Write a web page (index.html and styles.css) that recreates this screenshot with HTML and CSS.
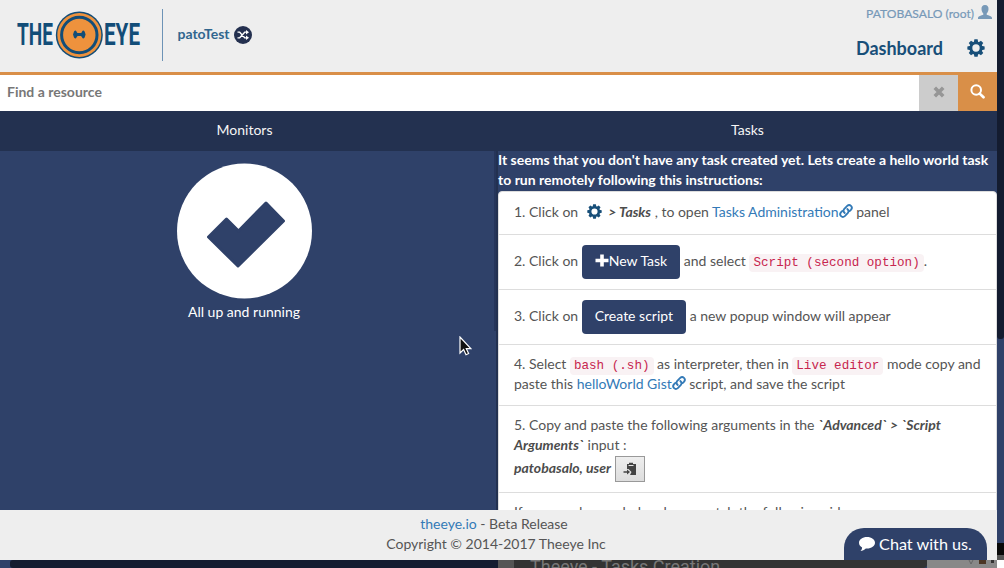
FILE: index.html
```html
<!DOCTYPE html>
<html lang="en">
<head>
<meta charset="utf-8">
<title>TheEye - Dashboard</title>
<link rel="stylesheet" href="styles.css">
</head>
<body>
<svg class="defs" width="0" height="0" aria-hidden="true">
  <symbol id="gear" viewBox="-10 -10 20 20">
    <circle r="5.7" fill="none" stroke="currentColor" stroke-width="3.2"/>
    <g fill="currentColor">
      <path id="teeth" d="M-1.8-9.6h3.6l.7 3.6h-5z"/>
      <use href="#teeth" transform="rotate(45)"/><use href="#teeth" transform="rotate(90)"/>
      <use href="#teeth" transform="rotate(135)"/><use href="#teeth" transform="rotate(180)"/>
      <use href="#teeth" transform="rotate(225)"/><use href="#teeth" transform="rotate(270)"/>
      <use href="#teeth" transform="rotate(315)"/>
    </g>
  </symbol>
  <symbol id="link" viewBox="0 0 14 14">
    <g fill="none" stroke="currentColor" stroke-width="1.9" stroke-linecap="round">
      <path d="M5.700 9C4.200 7.700 4.200 6 5.300 4.800L8.200 1.900C10.800-.4 14.300 2.900 12.100 5.600L10.600 7.100"/>
      <path d="M8.300 5C9.800 6.300 9.800 8 8.700 9.200L5.800 12.100C3.200 14.400-.3 11.100 1.900 8.400L3.400 6.900"/>
    </g>
  </symbol>
</svg>
<div class="screen">
  <div class="main">
    <div class="app">
      <header class="header">
        <svg class="logo" width="126" height="50" viewBox="0 0 126 50">
          <g class="logo-text">
            <text x="0" y="36.300" textLength="36" lengthAdjust="spacingAndGlyphs">THE</text>
            <text x="87" y="36.300" textLength="36" lengthAdjust="spacingAndGlyphs">EYE</text>
          </g>
          <circle cx="62.300" cy="26" r="23.500" fill="#124d78"/>
          <circle cx="62.300" cy="26" r="22" fill="#ee923d"/>
          <circle cx="62.300" cy="26" r="17.700" fill="none" stroke="#124d78" stroke-width="3"/>
          <path d="M57 22.500q1.500-2 2.500 0q.5 1.500 1.300 1.500h3q.8 0 1.300-1.500q1-2 2.500 0l1 3-1 3q-1.500 2-2.500 0q-.5-1.500-1.300-1.500h-3q-.8 0-1.300 1.500q-1 2-2.500 0l-1-3z" fill="#124d78"/>
        </svg>
        <div class="customer">
          <span>patoTest</span>
          <svg width="18" height="18" viewBox="0 0 18 18">
            <circle cx="9" cy="9" r="9" fill="#24304f"/>
            <g fill="none" stroke="#fff" stroke-width="1.300"><path d="M3.500 6.200h2.200l5 5.600h2M3.500 11.800h2.200l5-5.600h2"/></g>
            <path d="M12 4l3 2.200-3 2.200zM12 9.600l3 2.200-3 2.200z" fill="#fff"/>
          </svg>
        </div>
        <div class="session">
          <div class="user">
            <span>PATOBASALO (root)</span>
            <svg width="14" height="14" viewBox="0 0 14 14"><path d="M7 0c2.500 0 3.700 1.700 3.500 4.200C10.300 6.300 9.600 7.600 8.700 8.400v1.300c1.600.8 5.300 1.300 5.300 3.300v1H0v-1c0-2 3.700-2.500 5.300-3.300V8.400C4.400 7.600 3.700 6.300 3.500 4.200 3.300 1.700 4.500 0 7 0z" fill="#7799b8"/></svg>
          </div>
          <nav class="nav"><span>Dashboard</span><svg class="gear" width="18" height="18"><use href="#gear"/></svg></nav>
        </div>
      </header>
      <div class="search">
        <div class="search-input">Find a resource</div>
        <div class="search-clear"><svg width="12" height="12" viewBox="0 0 12 12"><path d="M1.800 1.800l8.400 8.400M10.200 1.800l-8.400 8.400" stroke="#969696" stroke-width="3.600"/></svg></div>
        <div class="search-go"><svg width="15" height="15" viewBox="0 0 15 15" fill="none" stroke="#fff"><circle cx="6.200" cy="6" r="4.800" stroke-width="2"/><path d="M9.700 9.600l3.800 3.700" stroke-width="2.700" stroke-linecap="round"/></svg></div>
      </div>
      <div class="heads"><div class="head-monitors">Monitors</div><div class="head-tasks">Tasks</div></div>
      <div class="panels">
        <section class="monitors">
          <svg width="136" height="136" viewBox="0 0 136 136"><circle cx="68.500" cy="68" r="67.500" fill="#fff"/><path d="M32.500 74L50.500 56L62.500 68L90 40L107.500 58L62 103Z" fill="#2f4169" stroke="#2f4169" stroke-width="3" stroke-linejoin="round"/></svg>
          <div>All up and running</div>
        </section>
        <div class="gutter"><div class="gutter-thumb"></div></div>
        <section class="tasks">
          <div class="intro">It seems that you don't have any task created yet. Lets create a hello world task<br>to run remotely following this instructions:</div>
          <ol class="steps">
            <li class="step step-1">1. Click on <svg class="step-gear" width="15" height="15"><use href="#gear"/></svg> <b class="em">&gt; Tasks</b> , to open <a>Tasks Administration<svg class="link" width="14" height="14"><use href="#link"/></svg></a> panel</li>
            <li class="step step-button">2. Click on <span class="btn"><svg class="plus" width="14" height="13" viewBox="0 0 14 13"><path d="M7 .5v12M.5 6.500h13" stroke="#fff" stroke-width="3.600"/></svg>New Task</span> and select <code>Script (second option)</code>.</li>
            <li class="step step-button">3. Click on <span class="btn">Create script</span> a new popup window will appear</li>
            <li class="step step-4">4. Select <code>bash (.sh)</code> as interpreter, then in <code>Live editor</code> mode copy and<br>paste this <a>helloWorld Gist<svg class="link" width="14" height="14"><use href="#link"/></svg></a> script, and save the script</li>
            <li class="step step-5">5. Copy and paste the following arguments in the <b class="em">`Advanced` &gt; `Script<br>Arguments`</b> input :
              <div class="copy-row"><b class="em">patobasalo, user</b>
                <span class="copy"><svg width="14" height="14" viewBox="0 0 14 14"><path d="M4 2h2V.8h4V2h3v11H7l1.500-3L5.500 7H4z" fill="#444"/><path d="M5.500 3.500h5" stroke="#e5e5e5"/><path d="M.5 10h4" stroke="#444" stroke-width="1.500"/><path d="M4 7.500L7 10 4 12.500z" fill="#444"/></svg></span>
              </div>
            </li>
            <li class="step">If you need some help, please watch the following video</li>
          </ol>
        </section>
      </div>
      <footer class="footer"><div class="release"><a>theeye.io</a> - Beta Release</div><div>Copyright © 2014-2017 Theeye Inc</div></footer>
      <div class="chat"><svg width="16" height="14" viewBox="0 0 16 14"><path d="M8 0c4.500 0 8 2.500 8 5.700s-3.500 5.800-8 5.800l-1.200-.1C5.300 13 3.500 13.800 1.500 14c1-1 1.500-2 1.600-3.500C1.200 9.400 0 7.700 0 5.700 0 2.500 3.500 0 8 0z" fill="#fff"/></svg><span>Chat with us.</span></div>
      <svg class="cursor" width="13" height="21" viewBox="0 0 13 21"><path d="M1 1v16l3.600-3.500L7 18.700l2.600-1.200-2.300-4.800h4.500z" fill="#111" stroke="#fff" stroke-width="1.200"/></svg>
    </div>
    <div class="page-scroll"><div class="page-thumb"></div><div class="page-rest"></div><div class="page-end"></div></div>
  </div>
  <div class="under">
    <div class="under-left"><div class="under-thumb"></div></div>
    <div class="under-edge"></div>
    <div class="video"><span>Theeye - Tasks Creation</span></div>
    <div class="video-end"><svg width="30" height="8" viewBox="0 0 30 8"><path d="M2 0l2 4 2-4" stroke="#666" fill="none"/><path d="M12 0h7v4h-7z" fill="#4b3524"/><path d="M24 0h3v3h-3z" fill="#333"/></svg></div>
    <div class="under-corner"></div>
  </div>
</div>
</body>
</html>
```

FILE: styles.css
```css
* { box-sizing: border-box; }
body { margin: 0; font: 14px/20px Lato, "Liberation Sans", sans-serif; color: #555; overflow: hidden; }
.defs { position: absolute; }
.screen { width: 1004px; height: 568px; background: #2f4169; display: flex; flex-direction: column; overflow: hidden; }
.main { display: flex; height: 560px; }
.app { position: relative; width: 997px; display: flex; flex-direction: column; }
a { color: #337ab7; }
.em { font-style: italic; font-weight: 700; color: #4c4c4c; }

.header { height: 75px; flex: none; background: #eee; border-bottom: 3px solid #d98f48; display: flex; padding: 9px 5px 0 17px; }
.logo { flex: none; overflow: visible; }
.logo-text { font: 700 31px Roboto, sans-serif; fill: #124d78; }
.customer { height: 52px; margin-left: 19px; padding-left: 14.500px; border-left: 1px solid #6d93b6; display: flex; align-items: center; gap: 4px; font-weight: 700; color: #31668e; }
.customer span { margin-top: -2px; }
.session { margin-left: auto; margin-top: -9px; }
.user { height: 28px; display: flex; align-items: center; justify-content: flex-end; gap: 4px; font-size: 12.100px; color: #7799b8; -webkit-text-stroke: .2px #7799b8; }
.user svg { margin-top: -4px; }
.nav { display: flex; align-items: center; justify-content: flex-end; gap: 24px; height: 40px; padding-right: 7px; font-size: 18px; font-weight: 700; color: #184f79; }

.search { height: 36px; flex: none; display: flex; }
.search-input { flex: 1; background: #fff; padding: 7px; font-weight: 700; color: #777; }
.search-clear, .search-go { width: 39px; background: #ccc; display: flex; align-items: center; justify-content: center; padding-bottom: 3px; }
.search-go { background: #d98f48; }

.heads { height: 40px; flex: none; display: flex; background: #233150; color: #f5f5f5; text-align: center; line-height: 38px; }
.head-monitors { width: 489px; }
.head-tasks { width: 499px; margin-left: 9px; }

.panels { height: 359px; flex: none; display: flex; overflow: hidden; }
.monitors { width: 494px; padding: 12px 6px 0 0; color: #fff; text-align: center; }
.monitors svg { display: block; margin: 0 auto 3px; }
.gutter { width: 4px; border-right: 2px solid #233150; }
.gutter-thumb { width: 2px; height: 180px; background: #26355a; }
.tasks { width: 499px; }
.intro { height: 40px; margin-top: -1px; margin-bottom: 1px; color: #fff; font-weight: 700; white-space: nowrap; letter-spacing: .010px; }
.steps { list-style: none; margin: 0; padding: 0; background: #fff; border: 1px solid #ddd; border-radius: 4px 4px 0 0; }
.step { padding: 9px 15px; border-bottom: 1px solid #ddd; white-space: nowrap; }
.step-1 { height: 43px; padding-top: 10px; }
.step-button { height: 55px; line-height: 34px; }
.step-4 { height: 61px; }
.step-5 { height: 87px; }
.step-gear { color: #184f79; vertical-align: -2px; margin: 0 3px 0 5px; }
.link { vertical-align: -1px; }
.btn { display: inline-block; height: 34px; margin-top: 1px; padding: 0 13px; line-height: 32px; border-radius: 4px; background: #2f4169; color: #fff; vertical-align: top; }
.plus { vertical-align: -1px; }
code { font: 12.600px "Liberation Mono", monospace; color: #c7254e; background: #f9f2f4; border-radius: 4px; padding: 2px 4px; }
.copy-row { display: flex; align-items: center; gap: 4px; height: 26px; }
.copy { width: 30px; height: 26px; margin-top: 2px; border: 1px solid #999; background: linear-gradient(#eee, #ddd); display: flex; align-items: center; justify-content: center; }

.footer { height: 50px; flex: none; background: #eee; text-align: center; padding: 4px 5px 0 0; position: relative; }
.release { padding-right: 4px; }
.chat { position: absolute; right: 10px; bottom: 0; width: 143px; height: 32px; padding-bottom: 1px; border-radius: 20px 20px 0 0; background: #2f4169; color: #fff; font-size: 16.200px; display: flex; align-items: center; justify-content: center; gap: 4px; }
.cursor { position: absolute; left: 459px; top: 336px; }

.page-scroll { width: 7px; }
.page-thumb { height: 339px; background: #141c30; border-radius: 0 0 3px 3px; }
.page-rest { height: 204px; }
.page-end { height: 17px; background: linear-gradient(#080808 70%, #555 70%); }

.under { height: 8px; display: flex; overflow: hidden; }
.under-left { width: 498px; padding-left: 10px; }
.under-thumb { height: 8px; border-radius: 3px 0 0 3px; background: #141c30; }
.under-edge { width: 16px; background: #555; }
.video { width: 413px; background: #333; border-radius: 0 0 4px 0; color: #777; font: 18px/18px Roboto, sans-serif; padding-left: 16px; }
.video span { display: block; margin-top: -2px; }
.video-end { width: 70px; background: #888; display: flex; justify-content: flex-end; }
.under-corner { width: 7px; background: #fff; }
```
